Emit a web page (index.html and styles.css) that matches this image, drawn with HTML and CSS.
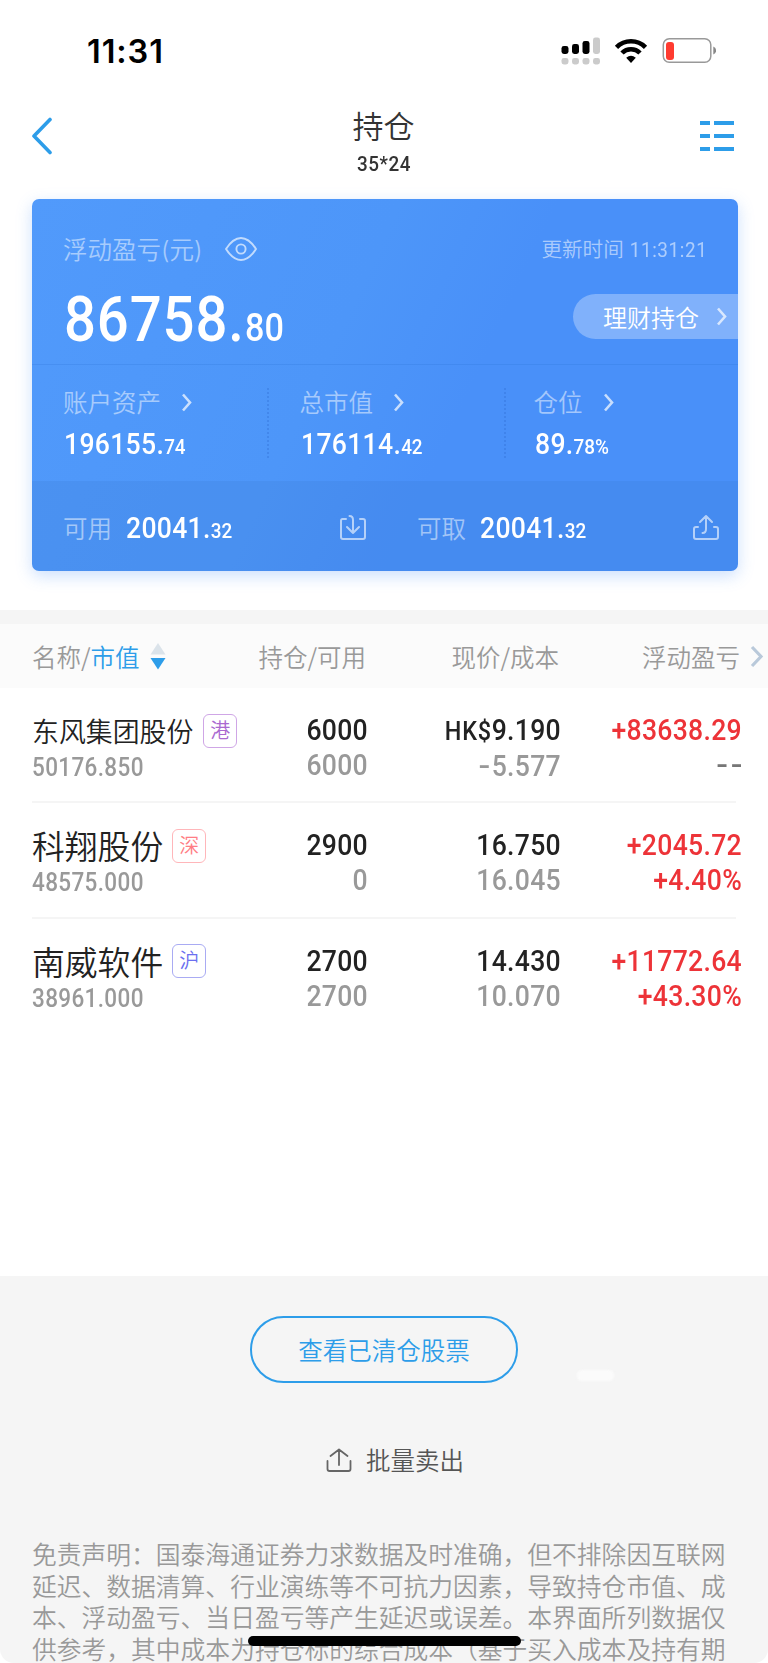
FILE: index.html
```html
<!DOCTYPE html>
<html lang="zh-CN">
<head>
<meta charset="utf-8">
<title>持仓</title>
<link rel="stylesheet" href="styles.css">
</head>
<body>
<div class="screen">
  <header class="status">
    <span class="clock">11:31</span>
    <svg class="status-icons" width="156" height="28" viewBox="0 0 156 28">
      <g fill="#000"><rect x="1.500" y="9" width="7" height="8" rx="2.400"/><rect x="12" y="7" width="7" height="10" rx="2.400"/><rect x="22.500" y="4" width="7" height="13" rx="2.400"/></g>
      <g fill="#cbcbcb"><rect x="33" y="0.500" width="7" height="16.500" rx="2.400"/><rect x="1.500" y="21" width="7" height="6.500" rx="2.400"/><rect x="12" y="21" width="7" height="6.500" rx="2.400"/><rect x="22.500" y="21" width="7" height="6.500" rx="2.400"/><rect x="33" y="21" width="7" height="6.500" rx="2.400"/></g>
      <g fill="none" stroke="#000" stroke-width="4.600"><path d="M56.500 10.300a20.500 20.500 0 0 1 29 0"/><path d="M62 16a12.600 12.600 0 0 1 18 0"/></g>
      <path d="M66.200 20.800q4.800-4.200 9.600 0L71 26z"/>
      <rect x="103.300" y="1.800" width="47.500" height="23.500" rx="6" fill="none" stroke="#999" stroke-width="1.500"/>
      <rect x="106" y="5" width="8" height="18" rx="3" fill="#ff3b30"/>
      <path d="M153.300 9.500q2.800 1 2.800 4t-2.800 4z" fill="#888"/>
    </svg>
  </header>
  <nav class="nav">
    <svg class="back" width="22" height="38" viewBox="0 0 22 38"><path d="M19 2.500 3 19l16 16.500" fill="none" stroke="#2d9de9" stroke-width="3.600" stroke-linecap="round" stroke-linejoin="round"/></svg>
    <div class="titles"><h1 class="title">持仓</h1><div class="subtitle num">35*24</div></div>
    <svg class="list" width="34" height="30" viewBox="0 0 34 30" fill="#2d9de9"><path d="M0 0h10v4H0zM14 0h20v4H14zM0 13h10v4H0zM14 13h20v4H14zM0 26h10v4H0zM14 26h20v4H14z"/></svg>
  </nav>

  <section class="card">
    <div class="hero">
      <div class="hero-top">
        <span class="soft">浮动盈亏<span class="paren">(</span>元<span class="paren">)</span></span>
        <svg class="eye" width="32" height="24" viewBox="0 0 32 24" fill="none" stroke="#fff" stroke-opacity=".65" stroke-width="1.900"><path d="M1 12Q8 1 16 1t15 11q-7 11-15 11T1 12z" stroke-linejoin="round"/><circle cx="16" cy="12" r="4.600"/></svg>
        <span class="updated">更新时间 <span class="num">11:31:21</span></span>
      </div>
      <div class="hero-main">
        <div class="total num"><span class="total-int">86758.</span><span class="total-dec">80</span></div>
        <div class="pill">理财持仓<svg class="chev" width="11" height="19" viewBox="0 0 11 19"><path d="m2 1.500 7 8-7 8"/></svg></div>
      </div>
    </div>
    <div class="stats">
      <div class="stat"><div class="soft">账户资产<svg class="chev" width="11" height="19" viewBox="0 0 11 19"><path d="m2 1.500 7 8-7 8"/></svg></div><div class="amount num"><span>196155.</span><small>74</small></div></div>
      <div class="stat"><div class="soft">总市值<svg class="chev" width="11" height="19" viewBox="0 0 11 19"><path d="m2 1.500 7 8-7 8"/></svg></div><div class="amount num"><span>176114.</span><small>42</small></div></div>
      <div class="stat"><div class="soft">仓位<svg class="chev" width="11" height="19" viewBox="0 0 11 19"><path d="m2 1.500 7 8-7 8"/></svg></div><div class="amount num"><span>89.</span><small>78%</small></div></div>
    </div>
    <div class="cash">
      <div class="cash-cell"><span class="soft">可用</span><span class="amount num"><span>20041.</span><small>32</small></span>
        <svg class="cash-icon" width="28" height="28" viewBox="0 0 28 28"><path d="M7 5H3.500Q2 5 2 7v16q0 2 2 2h20q2 0 2-2V7q0-2-2-2h-3M10.500 2q3.500 0 3.500 4v13M8 13l6 6 6-6"/></svg></div>
      <div class="cash-cell"><span class="soft">可取</span><span class="amount num"><span>20041.</span><small>32</small></span>
        <svg class="cash-icon" width="28" height="28" viewBox="0 0 28 28"><path d="M6 13H4q-2 0-2 2v8q0 2 2 2h20q2 0 2-2v-8q0-2-2-2h-2M10.500 19q3.500 0 3.500-4V2M8 8l6-6 6 6"/></svg></div>
    </div>
  </section>

  <div class="table-head">
    <span class="th first">名称/<b>市值</b><svg class="sort" width="16" height="27" viewBox="0 0 16 27"><path d="m8 0 7.500 11.500H.5z" fill="#dbe3ea"/><path d="m8 26.500 7.500-11.500H.5z" fill="#2d9de9"/></svg></span>
    <span class="th">持仓/可用</span><span class="th">现价/成本</span><span class="th">浮动盈亏</span>
    <svg class="more" width="14" height="23" viewBox="0 0 14 23"><path d="m2 2 9 9.500L2 21" fill="none" stroke="#b9c9da" stroke-width="3.200"/></svg>
  </div>
  <main class="rows">
    <div class="row">
      <div class="stock"><div class="name small">东风集团股份<i class="tag hk">港</i></div><div class="value num">50176.850</div></div>
      <div class="cell num"><div>6000</div><div class="dim">6000</div></div>
      <div class="cell num"><div><span class="ccy">HK$</span>9.190</div><div class="dim"><span class="minus">-</span>5.577</div></div>
      <div class="cell num red"><div>+83638.29</div><div class="dash"><span>-</span><span>-</span></div></div>
    </div>
    <div class="row">
      <div class="stock"><div class="name">科翔股份<i class="tag sz">深</i></div><div class="value num">48575.000</div></div>
      <div class="cell num"><div>2900</div><div class="dim">0</div></div>
      <div class="cell num"><div>16.750</div><div class="dim">16.045</div></div>
      <div class="cell num red"><div>+2045.72</div><div>+4.40%</div></div>
    </div>
    <div class="row">
      <div class="stock"><div class="name">南威软件<i class="tag sh">沪</i></div><div class="value num">38961.000</div></div>
      <div class="cell num"><div>2700</div><div class="dim">2700</div></div>
      <div class="cell num"><div>14.430</div><div class="dim">10.070</div></div>
      <div class="cell num red"><div>+11772.64</div><div>+43.30%</div></div>
    </div>
  </main>

  <footer class="footer">
    <div class="closed-btn">查看已清仓股票</div>
    <div class="batch"><svg width="26" height="25" viewBox="0 0 26 25" fill="none" stroke="#666" stroke-width="1.800" stroke-linecap="round" stroke-linejoin="round"><path d="M1.500 13v8q0 2 2 2h19q2 0 2-2v-8M13 17V1.500M4.500 8 13 1.500 21.500 8"/></svg>批量卖出</div>
    <p class="disclaimer">免责声明：国泰海通证券力求数据及时准确，但不排除因互联网<br>延迟、数据清算、行业演练等不可抗力因素，导致持仓市值、成<br>本、浮动盈亏、当日盈亏等产生延迟或误差。本界面所列数据仅<br>供参考，其中成本为持仓标的综合成本（基于买入成本及持有期</p>
    <div class="smudge"></div>
    <div class="home"></div>
  </footer>
</div>
</body>
</html>
```
FILE: styles.css
```css
* { box-sizing: border-box; }
body { margin: 0; background: #fff; }
.screen {
  width: 768px; height: 1663px; overflow: hidden;
  display: flex; flex-direction: column;
  font-family: "Noto Sans CJK SC", sans-serif; font-weight: 350;
  color: #222; white-space: nowrap;
}
/* narrow figures */
.num { font-family: Roboto, "Noto Sans CJK SC", sans-serif; font-weight: 500; transform: scaleX(.9); transform-origin: 0 50%; }

.status { flex: none; height: 100px; padding: 37px 52px 0 87px; display: flex; justify-content: space-between; align-items: flex-start; }
.clock { font: 600 32.500px/29px Inter, sans-serif; letter-spacing: .9px; color: #000; }

.nav { flex: none; height: 99px; padding: 0 34px 0 31px; display: flex; justify-content: space-between; }
.back { margin-top: 17px; }
.list { margin-top: 21px; }
.titles { text-align: center; margin-left: 14px; color: #333; }
.title { margin: 6px 0 0; font-size: 31px; line-height: 38px; font-weight: 350; }
.subtitle { font-size: 21px; line-height: 20px; margin-top: 10px; letter-spacing: .6px; transform-origin: 50% 50%; }

.card {
  flex: none; width: 706px; height: 372px; margin-left: 32px; border-radius: 7px; overflow: hidden;
  background: linear-gradient(115deg, #519afb 0%, #4d96f9 42%, #4990f9 60%, #4990f9 100%);
  box-shadow: 0 5px 16px rgba(73, 145, 248, .28); color: #fff;
}
.hero { height: 166px; padding: 32px 0 0 31px; border-bottom: 1px solid rgba(45, 115, 215, .25); }
.hero-top { height: 36px; display: flex; align-items: center; }
.soft { font-size: 24.500px; line-height: 36px; color: rgba(255, 255, 255, .5); }
.paren { font-family: Inter, sans-serif; font-weight: 300; }
.eye { margin-left: 22px; }
.updated { margin: -2px 30px 0 auto; font-size: 20.600px; color: rgba(255, 255, 255, .55); }
.updated .num { display: inline-block; transform-origin: 100% 50%; font-weight: 400; font-size: 21px; letter-spacing: .7px; margin-left: -7px; }
.hero-main { height: 74px; margin-top: 16px; display: flex; justify-content: space-between; }
.total { line-height: 73px; display: flex; align-items: baseline; margin-left: 1px; }
.total-int { font-size: 62.500px; letter-spacing: 1px; }
.total-dec { font-size: 38px; letter-spacing: .2px; }
.pill { width: 165px; height: 45px; margin-top: 11px; padding-left: 30px; border-radius: 23px 0 0 23px; background: rgba(255, 255, 255, .3); font-size: 24px; line-height: 43px; display: flex; align-items: center; padding-bottom: 1px; }
.chev { fill: none; stroke: #fff; stroke-opacity: .7; stroke-width: 2.600; margin-left: 17px; }
.stats { height: 116px; display: flex; padding: 20px 0 0 31px; }
.stat { flex: none; width: 236.500px; height: 72px; position: relative; }
.stat:nth-child(-n+2)::after { content: ""; position: absolute; right: 31px; top: 3px; height: 70px; border-right: 2px dotted rgba(45, 110, 210, .35); }
.stat:nth-child(2) { width: 234px; }
.stat:nth-child(2)::after { right: 28px; }
.stat .soft { height: 34px; line-height: 34px; display: flex; align-items: center; }
.stat .chev { margin-left: 20px; }
.amount { display: flex; align-items: baseline; font-size: 29.500px; line-height: 36px; letter-spacing: .35px; }
.amount small { font-size: 21px; letter-spacing: 0; }
.stat .amount { margin: 7px 0 0 1px; }
.cash { height: 90px; padding: 0 0 0 31px; display: flex; background: rgba(55, 115, 200, .18); }
.cash-cell { flex: none; width: 354px; display: flex; align-items: center; padding: 4px 50px 0 0; }
.cash-cell:last-child { width: 321px; padding-right: 18px; }
.cash .amount { margin: 2px 0 0 14px; }
.cash-icon { margin: 0 0 0 auto; fill: none; stroke: #fff; stroke-opacity: .6; stroke-width: 2; stroke-linecap: round; stroke-linejoin: round; }

.table-head {
  flex: none; height: 78px; margin-top: 39px; border-top: 14px solid #f5f5f5; background: #fbfbfb;
  padding: 1px 0 0 32px; display: grid; grid-template-columns: 169px 165px 193px 181px 28px; align-items: center;
  font-size: 24.500px; line-height: 36px; color: #999;
}
.th { text-align: right; }
.first { text-align: left; display: flex; align-items: center; }
.first b { font-weight: 350; color: #2d9de9; }
.sort { margin-left: 10px; }
.more { justify-self: end; margin-right: 4px; }

.rows { flex: none; height: 588px; padding: 0 32px; }
.row { position: relative; height: 115.300px; padding-top: 25px; display: grid; grid-template-columns: 225px 110px 193px 181px; }
.row:not(:last-child)::after { content: ""; position: absolute; left: 0; right: 0; bottom: 0; height: 2px; background: #f5f5f5; }
.name { height: 38px; padding-bottom: 4px; display: flex; align-items: center; font-size: 32.800px; line-height: 38px; font-weight: 350; }
.name.small { font-size: 26.900px; padding-bottom: 2px; }
.tag { font-style: normal; width: 34px; height: 34px; margin: 1px 0 0 9px; border: 1.500px solid; border-radius: 6px; font-size: 20px; line-height: 30px; text-align: center; }
.small .tag { margin: -1px 0 0 10px; }
.hk { color: #a968d0; border-color: #cfa6e6; }
.sz { color: #ff7d84; border-color: #ffb6ba; }
.sh { color: #6c6ff0; border-color: #a9abf3; }
.value { font-size: 25px; line-height: 30px; margin-top: 2px; letter-spacing: .4px; color: #999; }
.cell { text-align: right; font-size: 29.500px; line-height: 35px; letter-spacing: .35px; margin-right: -1px; margin-left: 1px; transform-origin: 100% 50%; }
.dim { color: #999; }
.ccy { font-size: 26px; letter-spacing: .8px; }
.minus, .dash span { display: inline-block; transform: scaleX(1.3); }
.minus { margin-right: 3px; }
.red { color: #ed3338; }
.dash { color: #777; }
.dash span { margin: 0 1px 0 4px; }

.footer { flex: none; height: 387px; background: #f5f5f5; position: relative; border-radius: 0 0 14px 14px; display: flex; flex-direction: column; align-items: center; }
.closed-btn { flex: none; width: 268px; height: 67px; margin-top: 40px; border: 2px solid #2d9de9; border-radius: 34px; text-align: center; font-size: 24.500px; line-height: 63px; color: #2d9de9; }
.batch { flex: none; margin: 59px 0 0 22px; height: 36px; display: flex; align-items: center; gap: 14px; font-size: 24.500px; line-height: 36px; color: #555; }
.disclaimer { margin: 60px 0 0 32px; align-self: flex-start; font-size: 24.780px; line-height: 31.600px; color: #999; text-spacing-trim: space-all; }
.smudge { position: absolute; left: 577px; top: 94px; width: 37px; height: 11px; border-radius: 5px; background: #fbfbfb; filter: blur(1px); }
.home { position: absolute; left: 248px; top: 360px; width: 273px; height: 10px; border-radius: 5px; background: #000; }
```
